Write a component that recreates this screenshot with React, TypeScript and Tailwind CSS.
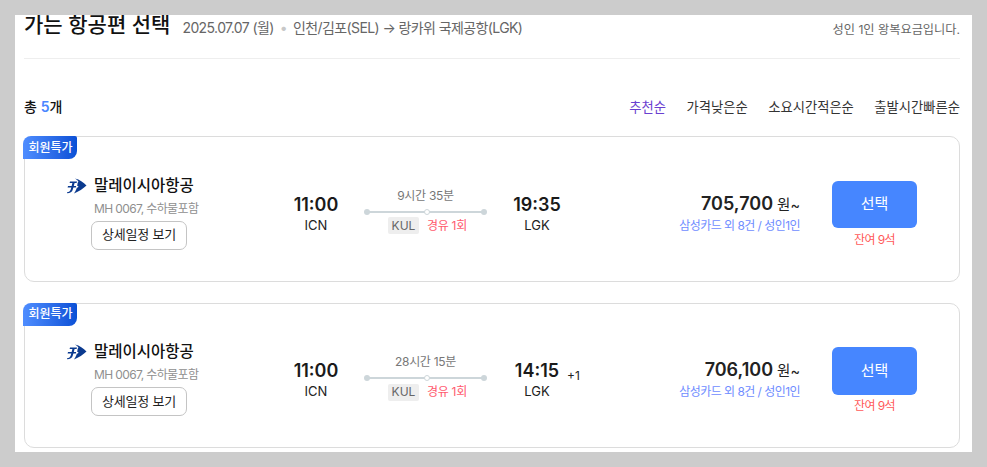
const sortOptions = ["추천순", "가격낮은순", "소요시간적은순", "출발시간빠른순"];

interface Flight {
  duration: string;
  arrive: string;
  nextDay?: boolean;
  price: string;
}

const flights: Flight[] = [
  { duration: "9시간 35분", arrive: "19:35", price: "705,700" },
  { duration: "28시간 15분", arrive: "14:15", nextDay: true, price: "706,100" },
];

const AirlineLogo = () => (
  <svg width="20" height="16" viewBox="0 0 20 16" className="mt-[3px] shrink-0">
    <path d="M8 0.5 C12.5 1.5 16.5 4.5 19.5 7.5 C16 10.5 12 13.5 7 15.5 C9 12.5 9.6 10.5 9.9 9.4 L11 9.4 L11.4 8 L10.2 8 L10.6 5 L11.4 3.5 C10.8 2.5 9.5 1.5 8 0.5Z" fill="#0b3a8f" />
    <path d="M3 3.5 H10 L9.6 5 H7.6 L5.8 11.5 C5.2 14 3 15.2 0.2 15.2 L0 14.2 C2 14.2 3.2 13.2 3.8 11.2 L5.4 5 H2.6Z" fill="#0b3a8f" />
    <path d="M1 8 H9.2 L8.8 9.4 H0.6Z" fill="#0b3a8f" />
  </svg>
);

const FlightCard = ({ flight }: { flight: Flight }) => (
  <div className="relative h-[145.6px] rounded-[10px] border border-[#dcdcdc] bg-white pl-[42px] pt-[37.7px]">
    <div className="absolute left-[-2px] top-[-1px] flex h-[23px] w-[54px] items-center justify-center rounded-tl-[8px] rounded-br-[8px] rounded-tr-[2px] bg-gradient-to-r from-[#4f8dff] to-[#0a50d6] pl-[1px] text-[12px] font-medium text-white">
      회원특가
    </div>
    <div className="flex items-start">
      <div className="flex w-[223px] gap-[7px]">
        <AirlineLogo />
        <div className="flex flex-col items-start">
          <p className="mt-[1px] text-[15.5px] font-medium leading-[20px] text-[#111]">말레이시아항공</p>
          <p className="mt-[5px] text-[12px] leading-[16px] tracking-[-0.62px] text-[#8f8f8f]">MH 0067, 수하물포함</p>
          <button className="ml-[-3px] mt-[4px] flex h-[29px] w-[96px] items-center justify-center rounded-[7px] border border-[#c4c4c4] text-[13px] tracking-[-0.2px] text-[#222]">
            상세일정 보기
          </button>
        </div>
      </div>
      <div className="mt-[19px] flex w-[52px] flex-col items-center">
        <p className="text-[18px] font-semibold leading-[22px] text-[#1a1a1a]">11:00</p>
        <p className="text-[13px] leading-[18px] text-[#222]">ICN</p>
      </div>
      <div className="ml-[23px] mt-[13px] w-[120px]">
        <p className="pl-[1px] text-center text-[12px] leading-[16px] tracking-[-0.3px] text-[#777]">{flight.duration}</p>
        <div className="relative mx-[1px] mt-[7px] h-[2px] bg-[#cdd6da]">
          <span className="absolute left-[-2px] top-[-2px] h-[6px] w-[6px] rounded-full bg-[#cdd6da]" />
          <span className="absolute left-[58px] top-[-2px] h-[6px] w-[6px] rounded-full border border-[#cdd6da] bg-white" />
          <span className="absolute right-[-3px] top-[-2px] h-[6px] w-[6px] rounded-full bg-[#cdd6da]" />
        </div>
        <div className="mt-[4px] flex items-center gap-[8px] pl-[23px]">
          <span className="flex h-[17px] w-[31px] items-center justify-center rounded-[2px] bg-[#eeeeee] text-[12px] text-[#666]">KUL</span>
          <span className="text-[12px] tracking-[-0.3px] text-[#ff5a6e]">경유 1회</span>
        </div>
      </div>
      <div className="relative ml-[24px] mt-[19px] flex w-[56px] flex-col items-center">
        <p className="text-[18px] font-semibold leading-[22px] text-[#1a1a1a]">{flight.arrive}</p>
        <p className="text-[13px] leading-[18px] text-[#222]">LGK</p>
        {flight.nextDay && <span className="absolute left-[58px] top-[7px] text-[12px] text-[#222]">+1</span>}
      </div>
      <div className="mt-[18px] flex w-[235px] flex-col items-end">
        <p className="flex items-baseline gap-[4px] leading-[22px] text-[#222]">
          <span className="text-[18px] font-semibold">{flight.price}</span>
          <span className="text-[14.5px]">원~</span>
        </p>
        <p className="mt-[2px] text-[12px] leading-[16px] tracking-[-0.55px] text-[#6f8dff]">삼성카드 외 8건 / 성인1인</p>
      </div>
      <div className="ml-[32px] mt-[6px] flex w-[85px] flex-col items-center">
        <button className="h-[47.5px] w-[85px] rounded-[6px] bg-[#4686ff] text-[15px] text-white">선택</button>
        <p className="mt-[3.5px] text-[12px] leading-[16px] tracking-[-0.6px] text-[#ff5a5a]">잔여 9석</p>
      </div>
    </div>
  </div>
);

export default function App() {
  return (
    <div className="h-[467px] w-[987px] overflow-hidden bg-[#cccccc] px-[15px] py-[15px] font-['Inter','Noto_Sans_CJK_KR',sans-serif]">
      <div className="h-[437px] w-[957px] overflow-hidden bg-white pl-[9px] pr-[12px]">
        <header className="flex h-[44px] items-start justify-between border-b border-[#eeeeee]">
          <div className="flex items-center">
            <h1 className="mt-[-6px] text-[21px] font-medium leading-[32px] text-[#111]">가는 항공편 선택</h1>
            <p className="ml-[12px] mt-[-2px] text-[14px] tracking-[-0.6px] text-[#666]">
              2025.07.07 (월)
              <span className="mx-[6px] text-[#c8c8c8]">•</span>
              인천/김포(SEL) → 랑카위 국제공항(LGK)
            </p>
          </div>
          <p className="mt-[6px] text-[12.2px] leading-[18px] text-[#666]">성인 1인 왕복요금입니다.</p>
        </header>
        <div className="mt-[38px] flex items-center justify-between">
          <p className="text-[14px] font-medium leading-[20px] text-[#111]">
            총 <span className="font-semibold text-[#4a86ff]">5</span>개
          </p>
          <ul className="flex gap-[20.5px] text-[13.3px] leading-[20px] text-[#333]">
            {sortOptions.map((option, i) => (
              <li key={option} className={i === 0 ? "text-[#6a3fd0]" : ""}>{option}</li>
            ))}
          </ul>
        </div>
        <div className="mt-[19px] flex flex-col gap-[21px]">
          {flights.map((flight) => (
            <FlightCard key={flight.price} flight={flight} />
          ))}
        </div>
      </div>
    </div>
  );
}
